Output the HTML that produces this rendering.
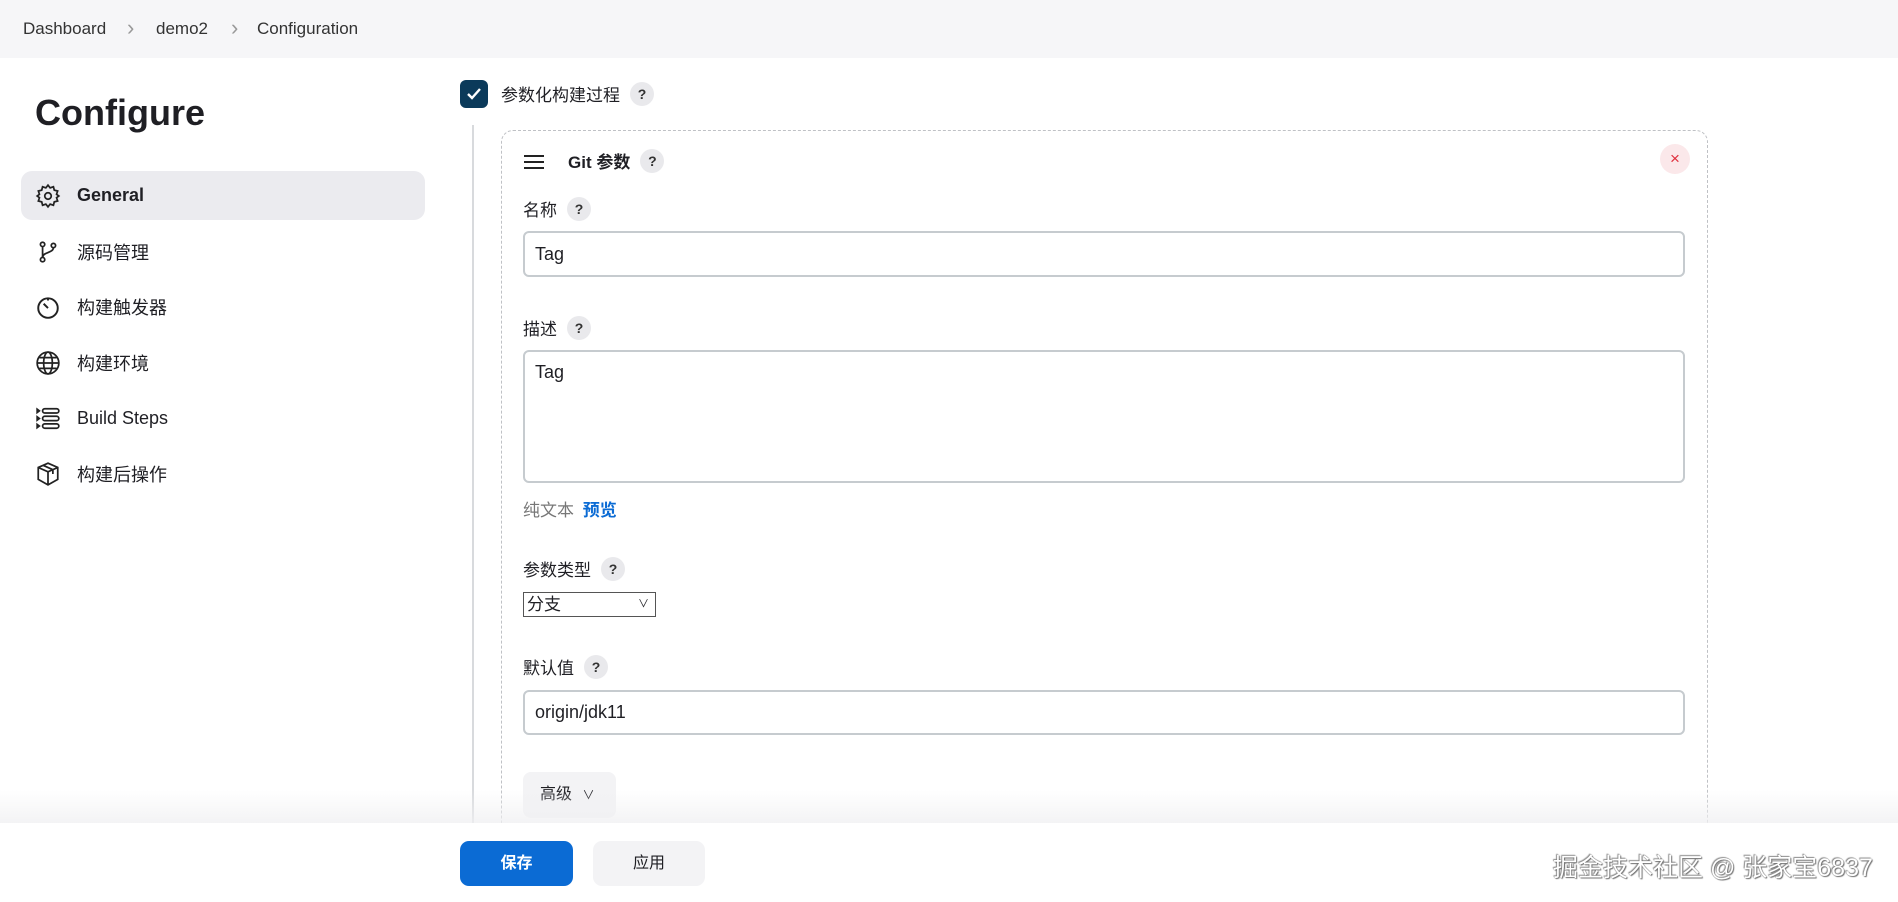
<!DOCTYPE html>
<html><head><meta charset="utf-8"><style>
*{box-sizing:border-box;margin:0;padding:0}
html{width:1898px;height:902px;overflow:hidden}
body{width:1898px;height:902px;overflow:hidden;background:#fff;font-family:"Liberation Sans","Noto Sans CJK SC",sans-serif;color:#1f1f24;position:relative}
.abs{position:absolute}
.crumb{left:0;top:0;width:1898px;height:58px;background:#f6f6f8;font-size:17px;color:#333}
.crumb span{position:absolute;top:19px}
.title{left:35px;top:92px;font-size:36px;font-weight:bold}
.nav{left:21px;width:404px;height:49px;border-radius:11px;font-size:18px;display:flex;align-items:center}
.nav svg{position:absolute;left:14px}
.nav .t{position:absolute;left:56px}
.q{display:inline-block;width:24px;height:24px;border-radius:50%;background:#e9e9ec;font-size:14px;font-weight:bold;text-align:center;line-height:24px;color:#333}
.lbl{font-size:17px;display:flex;align-items:center;gap:10px}
.inp{border:2px solid #c6cbcf;border-radius:6px;background:#fff;font-size:18px;padding-left:10px}
</style></head><body>
<div class="abs crumb"><span style="left:23px">Dashboard</span><span style="left:127px;color:#999;font-size:22px;top:15px">›</span><span style="left:156px">demo2</span><span style="left:231px;color:#999;font-size:22px;top:15px">›</span><span style="left:257px">Configuration</span></div>
<div class="abs title">Configure</div>

<div class="abs nav" style="top:171px;background:#ebebef;font-weight:bold"><svg width="26" height="26" viewBox="0 0 24 24" fill="none" stroke="#222" stroke-width="1.6"><circle cx="12" cy="12" r="3"/><path d="M12 2l2 2.5 3-1 .8 3.1 3.1.8-1 3L22 12l-2.1 1.6 1 3-3.1.8-.8 3.1-3-1L12 22l-2-2.5-3 1-.8-3.1-3.1-.8 1-3L2 12l2.1-1.6-1-3 3.1-.8.8-3.1 3 1z"/></svg><span class="t">General</span></div>
<div class="abs nav" style="top:227px"><svg width="26" height="26" viewBox="0 0 24 24" fill="none" stroke="#222" stroke-width="1.6"><circle cx="7" cy="5" r="2"/><circle cx="7" cy="19" r="2"/><circle cx="17" cy="6" r="2"/><path d="M7 7v10M17 8c0 5-10 4-10 9"/></svg><span class="t">源码管理</span></div>
<div class="abs nav" style="top:282px"><svg width="26" height="26" viewBox="0 0 24 24" fill="none" stroke="#222" stroke-width="1.8"><circle cx="12" cy="13" r="9"/><path d="M12 4v2M8 9l4 4"/></svg><span class="t">构建触发器</span></div>
<div class="abs nav" style="top:338px"><svg width="26" height="26" viewBox="0 0 24 24" fill="none" stroke="#222" stroke-width="1.6"><circle cx="12" cy="12" r="10"/><ellipse cx="12" cy="12" rx="4" ry="10"/><path d="M2 12h20M4 7h16M4 17h16"/></svg><span class="t">构建环境</span></div>
<div class="abs nav" style="top:394px"><svg width="26" height="26" viewBox="0 0 24 24" fill="none" stroke="#222" stroke-width="1.6"><path d="M2 3l2 1.5L2 6zM2 10l2 1.5L2 13zM2 17l2 1.5L2 20z"/><rect x="7" y="2.5" width="15" height="4" rx="2"/><rect x="7" y="9.5" width="15" height="4" rx="2"/><rect x="7" y="16.5" width="15" height="4" rx="2"/></svg><span class="t">Build Steps</span></div>
<div class="abs nav" style="top:449px"><svg width="26" height="26" viewBox="0 0 24 24" fill="none" stroke="#222" stroke-width="1.6"><path d="M12 2l9 4v11l-9 5-9-5V6z M3 6l9 4 9-4M12 10v12M7.5 4l9 4v4"/></svg><span class="t">构建后操作</span></div>

<div class="abs" style="left:460px;top:80px;width:28px;height:28px;border-radius:6px;background:#0b3a5a"><svg width="28" height="28" viewBox="0 0 28 28"><path d="M8 14l4 4 8-9" stroke="#fff" stroke-width="2.4" fill="none"/></svg></div>
<div class="abs lbl" style="left:501px;top:81px">参数化构建过程 <span class="q">?</span></div>
<div class="abs" style="left:472px;top:125px;width:2px;height:698px;background:#d8dadd"></div>
<div class="abs" style="left:501px;top:130px;width:1207px;height:693px;border:1.5px dashed #bfc1c5;border-bottom:none;border-radius:12px 12px 0 0"></div>
<div class="abs" style="left:524px;top:155px;width:20px;height:14px;border-top:2px solid #222;border-bottom:2px solid #222"><div style="margin-top:4px;height:2px;background:#222"></div></div>
<div class="abs lbl" style="left:568px;top:148px;font-weight:bold">Git 参数 <span class="q">?</span></div>
<div class="abs" style="left:1660px;top:144px;width:30px;height:30px;border-radius:50%;background:#fbe8ea;color:#e0303e;text-align:center;line-height:30px;font-size:17px">×</div>

<div class="abs lbl" style="left:523px;top:196px">名称 <span class="q">?</span></div>
<div class="abs inp" style="left:523px;top:231px;width:1162px;height:46px;line-height:42px">Tag</div>
<div class="abs lbl" style="left:523px;top:315px">描述 <span class="q">?</span></div>
<div class="abs inp" style="left:523px;top:350px;width:1162px;height:133px;padding-top:10px">Tag</div>
<div class="abs" style="left:523px;top:496px;font-size:17px"><span style="color:#777">纯文本</span> <b style="color:#0b6bd4;margin-left:4px">预览</b></div>
<div class="abs lbl" style="left:523px;top:556px">参数类型 <span class="q">?</span></div>
<div class="abs" style="left:523px;top:592px;width:133px;height:25px;border:1px solid #555;font-size:17px;padding-left:3px;line-height:23px;background:#fff">分支<span style="position:absolute;right:6px;font-size:11px">∨</span></div>
<div class="abs lbl" style="left:523px;top:654px">默认值 <span class="q">?</span></div>
<div class="abs inp" style="left:523px;top:690px;width:1162px;height:45px;line-height:41px">origin/jdk11</div>
<div class="abs" style="left:523px;top:772px;width:93px;height:46px;border-radius:8px;background:#f3f3f5;font-size:16px;line-height:46px;padding-left:17px">高级 <span style="font-size:12px;margin-left:6px">∨</span></div>

<div class="abs" style="left:0;top:790px;width:1898px;height:34px;background:linear-gradient(rgba(255,255,255,0),rgba(240,240,242,0.8))"></div>
<div class="abs" style="left:0;top:823px;width:1898px;height:79px;background:#fff"></div>
<div class="abs" style="left:460px;top:841px;width:113px;height:45px;border-radius:9px;background:#0b6bd4;color:#fff;font-weight:bold;font-size:16px;text-align:center;line-height:45px">保存</div>
<div class="abs" style="left:593px;top:841px;width:112px;height:45px;border-radius:9px;background:#f3f3f5;font-size:16px;text-align:center;line-height:45px">应用</div>
<div class="abs" style="left:1553px;top:848px;font-size:25px;color:#fff;text-shadow:0 0 1px #555,1px 1px 1px #777,-1px -1px 1px #999;white-space:nowrap">掘金技术社区 @ 张家宝6837</div>
</body></html>
